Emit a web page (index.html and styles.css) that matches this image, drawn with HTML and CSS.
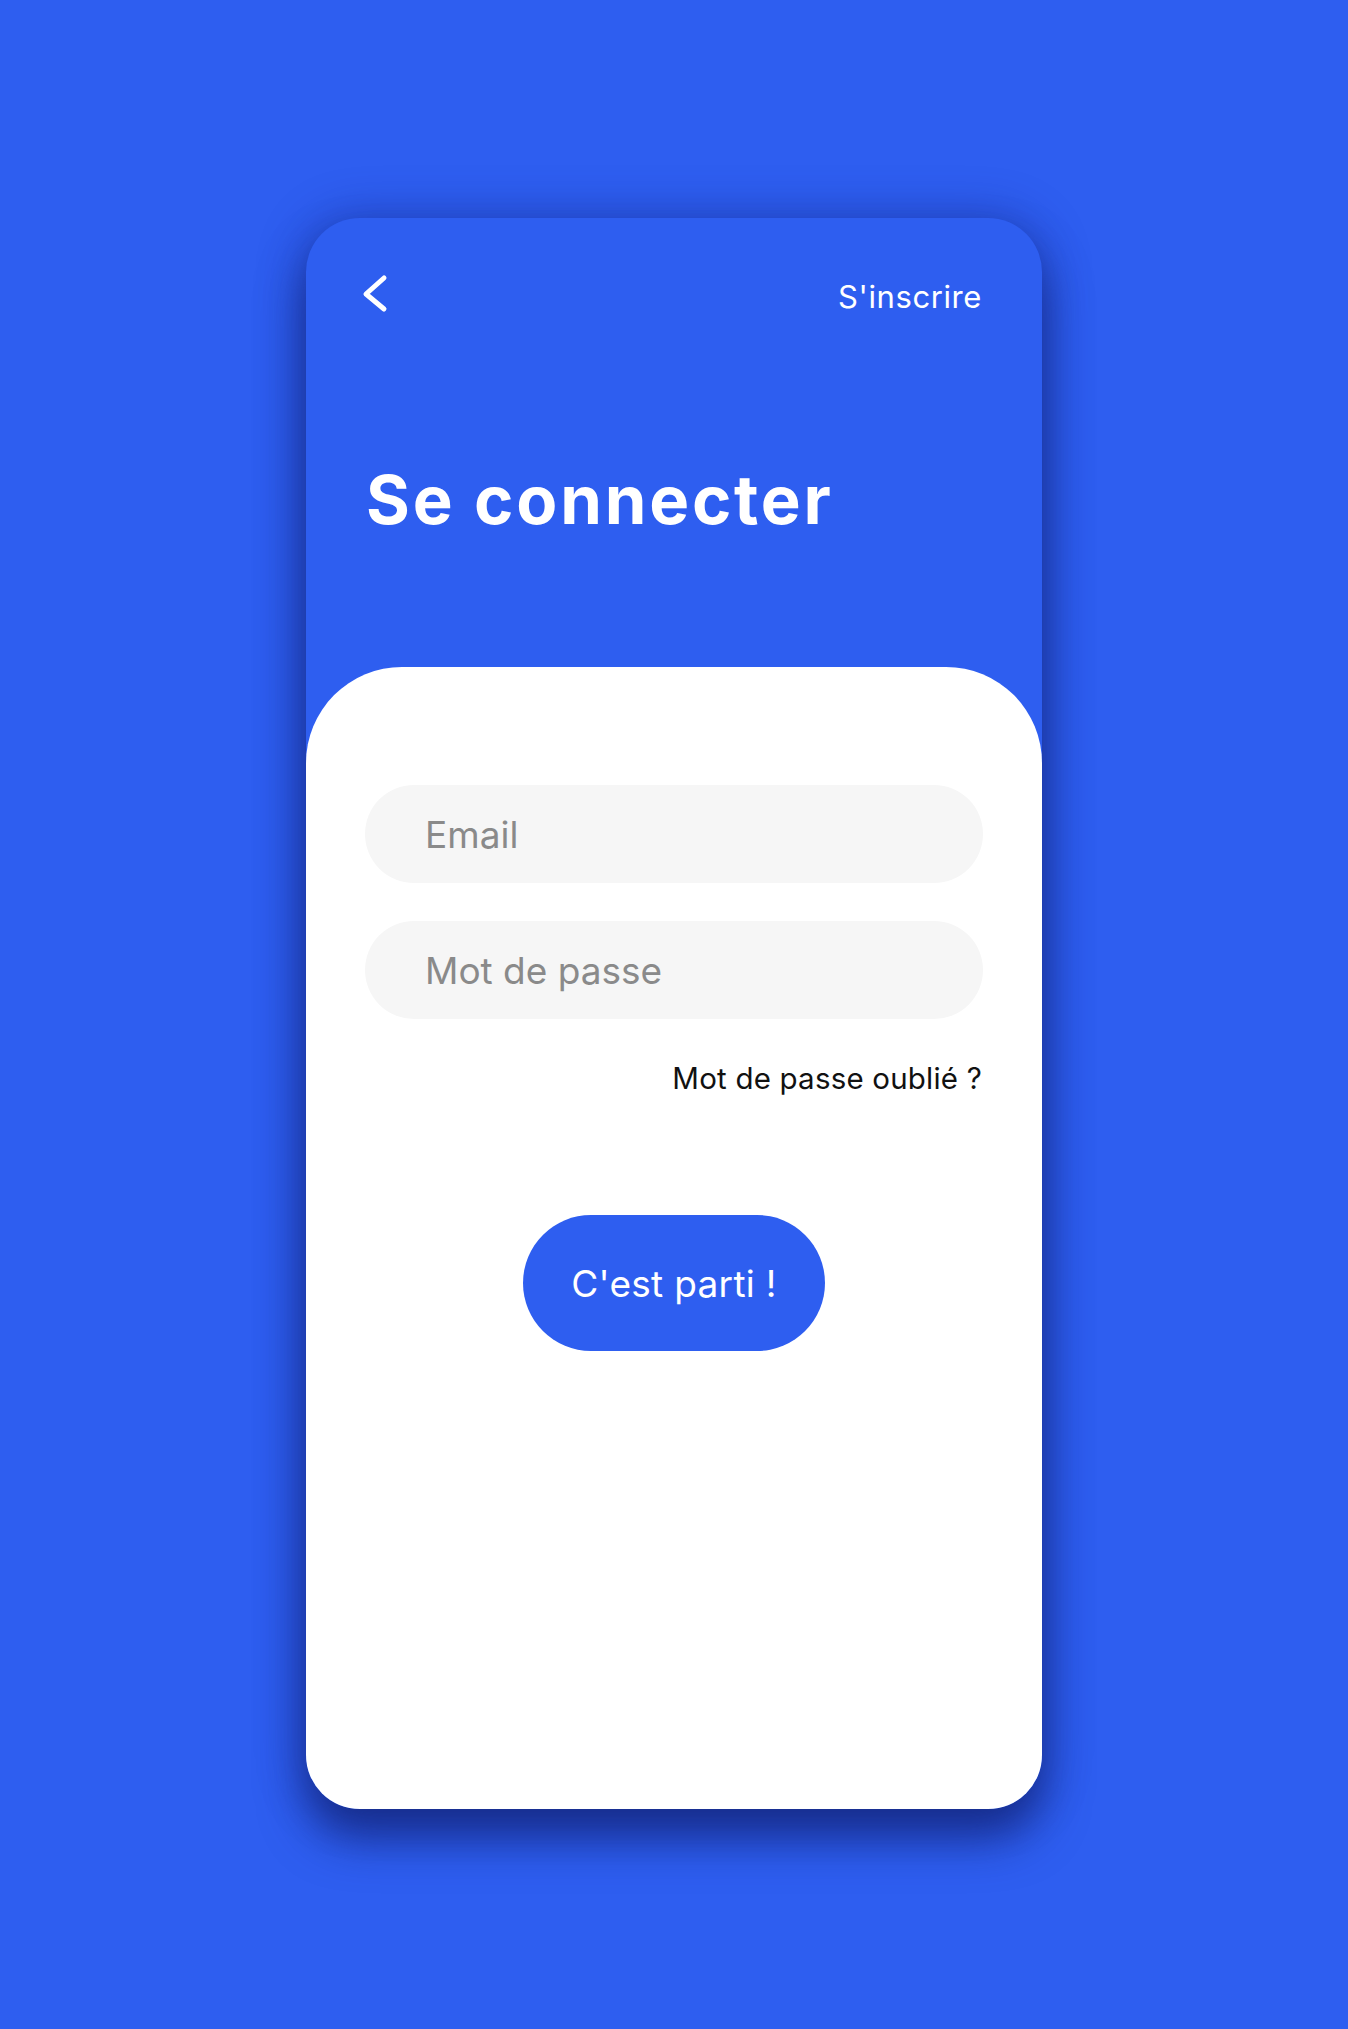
FILE: index.html
```html
<!DOCTYPE html>
<html lang="fr">
<head>
<meta charset="utf-8">
<title>Se connecter</title>
<link rel="stylesheet" href="styles.css">
</head>
<body>
<div class="stage">
  <div class="phone">
    <header class="top">
      <div class="nav">
        <svg class="back" width="28" height="40" viewBox="0 0 28 40" aria-label="Retour">
          <path d="M23 4 L5 20 L23 35" fill="none" stroke="#fff" stroke-width="5" stroke-linecap="round" stroke-linejoin="round"/>
        </svg>
        <a class="signup">S'inscrire</a>
      </div>
      <h1 class="title">Se connecter</h1>
    </header>
    <main class="sheet">
      <form class="form">
        <input class="field" type="email" placeholder="Email">
        <input class="field" type="password" placeholder="Mot de passe">
        <a class="forgot">Mot de passe oublié ?</a>
        <button class="go" type="button">C'est parti !</button>
      </form>
    </main>
  </div>
</div>
</body>
</html>
```

FILE: styles.css
```css
* { box-sizing: border-box; }
html, body {
  margin: 0;
  padding: 0;
}
body {
  background: #2e5ef0;
  font-family: Inter, "Open Sans", sans-serif;
  width: 1348px;
  height: 2029px;
  overflow: hidden;
}
.stage {
  padding-top: 218px;
  display: flex;
  justify-content: center;
}
.phone {
  width: 736px;
  height: 1591px;
  border-radius: 54px;
  overflow: hidden;
  background: #2e5ef0;
  display: flex;
  flex-direction: column;
  box-shadow: 0 30px 46px rgba(16, 30, 110, 0.7), 0 0 48px rgba(16, 32, 120, 0.42);
}
.top {
  height: 449px;
  flex: none;
  padding: 56px 60px 0 55px;
}
.nav {
  display: flex;
  justify-content: space-between;
  align-items: flex-start;
  height: 40px;
}
.back { display: block; }
.signup {
  color: #fff;
  font-size: 31px;
  line-height: 40px;
  letter-spacing: 0.6px;
  padding-top: 3px;
}
.title {
  margin: 146px 0 0 5px;
  color: #fff;
  font-size: 67px;
  font-weight: 700;
  line-height: 1.2;
  letter-spacing: 2.8px;
}
.sheet {
  flex: 1;
  background: #fff;
  border-radius: 96px 96px 0 0;
  padding: 118px 59px 0;
}
.form {
  display: flex;
  flex-direction: column;
}
.field {
  height: 98px;
  border: none;
  border-radius: 49px;
  background: #f6f6f6;
  padding: 0 0 0 60px;
  font-family: inherit;
  font-size: 37px;
  color: #333;
  outline: none;
}
.field + .field { margin-top: 38px; }
.field::placeholder { color: #8a8a8a; }
.forgot {
  align-self: flex-end;
  margin-top: 41px;
  font-size: 29.5px;
  line-height: 36px;
  color: #111;
  letter-spacing: 0.2px;
  padding-right: 1px;
}
.go {
  align-self: center;
  margin-top: 119px;
  width: 302px;
  height: 136px;
  border: none;
  border-radius: 68px;
  background: #2e5ef0;
  color: #fff;
  font-family: inherit;
  font-size: 37px;
  letter-spacing: 0.3px;
}
```
